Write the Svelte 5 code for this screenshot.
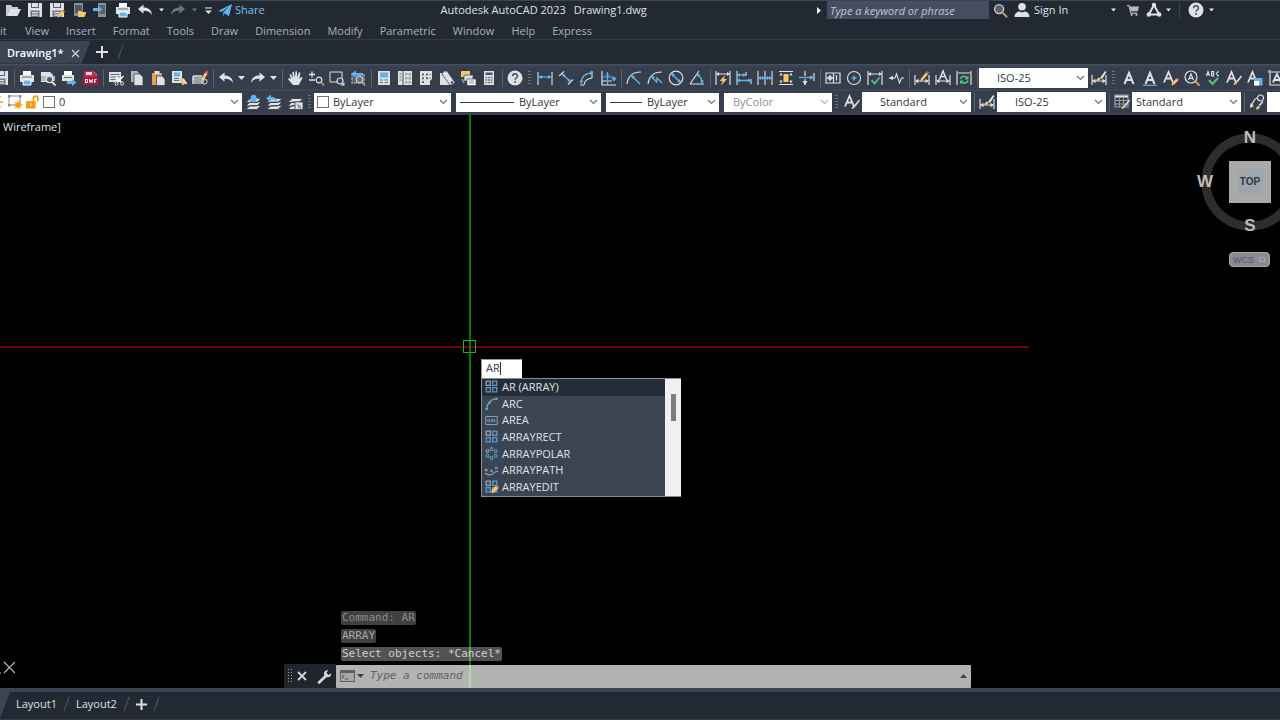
<script>
	const W = '#dfe1e5';
	const G = '#9aa1ab';
	const B = '#62b3ea';
	const Y = '#f5c766';
	const R = '#e0584f';
	const N = '#3b4453';

	const pencil = `<path d="M8.5 15.5l.8-3 4-4 2 2-4 4z" fill="${Y}"/><path d="M13.3 8.5l1-1 2 2-1 1z" fill="${R}"/>`;
	const brush = `<path d="M10 11.500l5-6 1 1-4.500 6z" fill="${W}"/><path d="M7.500 15c.2-2 1.300-3.500 3-3.200 1.500 1-.5 3.200-3 3.200z" fill="${Y}"/>`;
	const floppy = `<path d="M1 1h14v14H1z" fill="${W}"/><path d="M4 1h8v5H4z" fill="#5b626d"/><path d="M5 1h6v4H5z" fill="${W}"/><path d="M3.500 8.500h9V15h-9z" fill="#6c737d"/><path d="M5 10h6v1.300H5zM5 12.500h6v1.300H5z" fill="${W}"/>`;
	const printer = `<path d="M4 1h8v4H4z" fill="#fff"/><path d="M1 5h14v7H1z" fill="${W}"/><path d="M3 6.500h10v1H3z" fill="#666d78"/><path d="M4 10h8v5H4z" fill="${B}" stroke="#fff"/>`;
	const bigA = `<path d="M3.500 14L8 3l4.500 11M5.200 10h5.600" fill="none" stroke="${W}" stroke-width="2"/>`;
	const smallA = `<path d="M1 12.500L5.500 2 10 12.500M2.800 8.500h5.400" fill="none" stroke="${W}" stroke-width="1.800"/>`;
	const undo = `<path d="M1 7l5.500-4.500v3C11 5.500 14.500 7.500 15 13c-2-3.300-4.500-4.300-8.500-4.200v3z" fill="${W}"/>`;
	const redo = `<path d="M15 7L9.500 2.500v3C5 5.500 1.500 7.500 1 13c2-3.300 4.500-4.300 8.500-4.200v3z" fill="${W}"/>`;
	const squares = `<g fill="none" stroke="#5a9dcc" stroke-width="1.600"><path d="M9.500 1.500h5v5h-5zM1.500 9.500h5v5h-5zM9.500 9.500h5v5h-5z"/><path d="M1.500 1.500h5v5h-5z" stroke="${G}"/></g>`;
	const dim = `<path d="M1 5v10M15 5v10M2 11h12" stroke="${W}" fill="none" stroke-width="1.200"/><path d="M1 11l3.500-2.200v4.400zM15 11l-3.500-2.200v4.400z" fill="${W}"/>`;
	const layers = `<path d="M5 4.500h11l-4 4H1zM5 8h11l-4 4H1zM5 11.500h11l-4 4H1z" fill="${W}" stroke="${N}" stroke-width=".9"/>`;

	// 16x16 artwork
	const icons = {
		floppy,
		printer,
		undo,
		redo,
		open: `<path d="M1 14V3h5l1.500 2H13v2H5z" fill="#c9cbcf"/><path d="M5 7h11l-3.500 7H1z" fill="${W}"/>`,
		saveas: floppy + pencil,
		openweb: `<path d="M3 1h9v13H3z" fill="#8b8f96"/><path d="M4 3h7v8H4z" fill="#555b64"/><path d="M7 15V9h3l1 1h4v1.500L13.500 15z" fill="${Y}"/>`,
		saveweb: `<path d="M5 1h8v14H5z" fill="#8b8f96"/><path d="M6 3h6v9H6z" fill="#59616b"/><path d="M0 6h5V3.500L9.500 7.500 5 11V9H0z" fill="${B}"/>`,
		plane: `<path d="M0 9L16 1l-3.500 14-4.800-3.200L6 15.500V10.500L14 3 4.500 10z" fill="#5db7ef"/>`,
		custom: `<path d="M2 3.500h12" stroke="${W}" stroke-width="2"/><path d="M2 8h12l-6 6z" fill="${W}"/>`,
		search: `<circle cx="6.500" cy="6.500" r="4.800" fill="#59616d" stroke="#c6c9ce" stroke-width="1.500"/><path d="M10.500 10.500l4.500 4.700" stroke="#c9a06d" stroke-width="2"/>`,
		user: `<circle cx="8" cy="4.800" r="3.800" fill="${W}"/><path d="M.5 15c0-4 3-5.500 5-5.500l2.500 1 2.500-1c2 0 5 1.500 5 5.500z" fill="${W}"/>`,
		cart: `<path d="M1 3h2.500l2 8.500H13" fill="none" stroke="#b6b9be" stroke-width="1.300"/><path d="M4 4h11l-1.500 5.500H5.200z" fill="#b6b9be"/><circle cx="6.500" cy="13.500" r="1.300" fill="#b6b9be"/><circle cx="12" cy="13.500" r="1.300" fill="#b6b9be"/>`,
		triangle: `<path d="M8 3L2.800 12.500h10.400z" fill="none" stroke="${W}" stroke-width="2"/><circle cx="8" cy="3" r="2.200" fill="${W}"/><circle cx="2.800" cy="12.500" r="2.200" fill="${W}"/><circle cx="13.200" cy="12.500" r="2.200" fill="${W}"/>`,
		help: `<circle cx="8" cy="8" r="7.500" fill="${W}"/><path d="M5.600 6.300C5.600 3 10.600 3.200 10.400 6c0 1.700-2.300 1.800-2.300 3.800" fill="none" stroke="#4a515c" stroke-width="1.500"/><circle cx="8.100" cy="12" r="1" fill="#4a515c"/>`,
		preview: `<path d="M1 2h9l3 3v7H1z" fill="${W}"/><path d="M1 6h14v5H1z" fill="#b4b8be"/><circle cx="9.500" cy="9.500" r="3.200" fill="#525a66" stroke="${W}" stroke-width="1.300"/><path d="M12 12l3.500 3.500" stroke="${W}" stroke-width="1.800"/>`,
		publish: `<path d="M3 1h8v4H3z" fill="#fff"/><path d="M1 5h12v6H1z" fill="${W}"/><path d="M3 7h8v1H3z" fill="#666d78"/><path d="M6 11h5V9l4.500 3.500L11 16v-2H6z" fill="${B}"/>`,
		dwf: `<path d="M2 1h9l4 3.500V15H2z" fill="#e9e4e6"/><path d="M1 7h15v8H1z" fill="#b5123b"/><path d="M2 1h9l4 4v2H2z" fill="#c02a4d"/><path d="M4 2h6v3H4z" fill="#ecd5da"/><path d="M3.500 9v4M3.500 9.500h2v3h-2M7.300 9l.6 3.500 1-2.500 1 2.500.6-3.500M12.500 13V9.500h2M12.500 11.300H14" fill="none" stroke="#fff"/>`,
		cut: `<path d="M1 2h12v10H1z" fill="${W}"/><path d="M2.500 4.500h9M2.500 7h9M2.500 9.500h5" stroke="#656d79" stroke-width="1.200"/><path d="M15.500 6l-6.500 6.500M8 6.500l6 6.500" stroke="#fff" stroke-width="1.500"/><circle cx="8.500" cy="13.500" r="1.600" fill="${N}" stroke="${W}"/><circle cx="14" cy="13.500" r="1.600" fill="${N}" stroke="${W}"/>`,
		copy: `<path d="M2 1h6l3 3v8H2z" fill="#b3b7bd"/><path d="M5 4h6l3 3v8.500H5z" fill="${W}" stroke="${N}" stroke-width=".8"/>`,
		paste: `<path d="M2 3h10v12H2z" fill="#e0a158"/><path d="M4.500 1h5v3h-5z" fill="${W}"/><path d="M6.500 6H12l3 3v6.500H6.500z" fill="${W}" stroke="${N}" stroke-width=".8"/>`,
		match: `<path d="M1 1h10v12H1z" fill="${W}"/><path d="M3 2.500h6v4H3z" fill="${B}"/><path d="M3 8.500h5M3 10.500h5" stroke="#656d79"/><path d="M8 10l4-2 3 4-3 3.500z" fill="${Y}"/><path d="M12 9l3.500 5" stroke="${W}" stroke-width="2"/>`,
		blockedit: `<path d="M1 6h9M1 6v7h9M3 8l-2 2" stroke="${W}" stroke-width="1.500" fill="none"/><path d="M2 7h8l3 3-2 4H2z" fill="#9ba0a8"/><path d="M9 9l4-6.500 2.500 1.500-4 6z" fill="${Y}"/><path d="M13 2.500l1-2 2.500 1.500-1 2z" fill="${R}"/><circle cx="12.500" cy="11.500" r="2.600" fill="none" stroke="${W}"/>`,
		hand: `<path d="M4 9L2.500 4.500l1.300-.6L6 8 5.300 2l1.500-.2L8 7.200 8.500 1.200H10l.2 6.300L12 2.300l1.400.4-1 6.300 2-2 1.300.8-4 7.200H6L1 9.300 2 8z" fill="${W}"/>`,
		zoom: `<path d="M1 4.500h6M4 1.500v6M1 10h6" stroke="${W}" stroke-width="1.300"/><circle cx="11" cy="10" r="2.800" fill="none" stroke="${W}" stroke-width="1.200"/><path d="M13 12l3 3.500" stroke="#c9a06d" stroke-width="1.500"/>`,
		zoomwin: `<path d="M1 2h12v10H1z" fill="none" stroke="${W}"/><circle cx="11" cy="11" r="3" fill="${N}" stroke="${W}" stroke-width="1.200"/><path d="M15.500 12.500v3h-4z" fill="${W}"/>`,
		zoomprev: `<path d="M2 4h12v9H2z" fill="#5b6472" stroke="${G}" stroke-width="1.300" stroke-dasharray="3 1"/><path d="M1 4l5-3.500V3h7v2.500H6v2z" fill="${B}"/><circle cx="9.500" cy="9.500" r="3.300" fill="#68717e" stroke="${W}"/><path d="M12 12l3 3.500" stroke="#c9a06d" stroke-width="1.500"/>`,
		props: `<path d="M2 1h12v14H2z" fill="${W}"/><path d="M4 2.500h8v5H4z" fill="${B}"/><path d="M4 10h3M8.500 10H12M4 12.500h3M8.500 12.500H12" stroke="#6b727c"/>`,
		center: `<path d="M1 1h14v14H1z" fill="${W}"/><path d="M6 1v14M2.500 4h2M2.500 7h2M2.500 10h2" stroke="#5e6670" stroke-width="1.200"/><path d="M8 3h2.500v2.500H8zM11.500 3H14v2.500h-2.500zM8 7h2.500v2.500H8zM11.500 7H14v2.500h-2.500zM8 11h2.500v2.500H8zM11.500 11H14v2.500h-2.500z" fill="#a1a7af"/>`,
		palette: `<path d="M2 1h12v8l-2 2v4H2z" fill="${W}"/><path d="M4 3.500h2v2H4zM4 7.200h2v2H4zM4 11h2v2H4zM8 3.500h2v2H8zM8 7.200h2v2H8z" fill="#5c646f"/><path d="M11.500 4.500H13M11.500 8H13" stroke="#5c646f"/>`,
		sheet: `<path d="M1 3h5l9 8-3 4H1z" fill="${W}"/><path d="M5 1h3l8 11.500-3 2.500h-2L3 4z" fill="${W}" stroke="${N}" stroke-width=".8"/><circle cx="13" cy="12.500" r="1.200" fill="${N}"/>`,
		markup: `<path d="M1 1h9v6H1z" fill="${Y}"/><path d="M4 5h9v6H4z" fill="${W}" stroke="${N}" stroke-width=".7"/><path d="M7 9h9v6.500H7z" fill="#fff" stroke="${N}" stroke-width=".7"/><path d="M9 11h5M9 13h5" stroke="#8a9099"/><path d="M2 9l2 4" stroke="${B}" stroke-width="1.500"/>`,
		calc: `<path d="M3 1h10v14H3z" fill="${W}"/><path d="M4.500 2.500h7v2.500h-7z" fill="#4f5763"/><path d="M4.500 7.500h7M4.500 10h7M4.500 12.500h7" stroke="#68707b" stroke-width="1.600" stroke-dasharray="1.700 .9"/>`,
		linear: `<path d="M1 2v13M15 2v13" stroke="${W}" stroke-width="1.100"/><path d="M2 7h12" stroke="${B}" stroke-width="1.200"/><path d="M1.500 7L5 5v4zM14.500 7L11 5v4z" fill="${B}"/>`,
		aligned: `<path d="M1 6l5-4.500M10 14.500l5-5" stroke="${W}" stroke-width="1.100"/><path d="M4.500 4.500l8 7" stroke="${B}" stroke-width="1.400"/><path d="M4 4l3.800.7-2.600 2.800zM13 12l-3.800-.7 2.600-2.800z" fill="${B}"/>`,
		arclen: `<path d="M5 15C5.500 11 8 8.500 13 8M1 15h4M13 1v7" fill="none" stroke="${W}" stroke-width="1.100"/><path d="M2 13C2.500 6.500 6 3 13 3" fill="none" stroke="${B}" stroke-width="1.400"/><path d="M2 14L1 10l3.500.8zM14.500 3L11 1v4z" fill="${B}"/>`,
		ordinate: `<path d="M2 1v14h14M2 11h10" fill="none" stroke="${W}" stroke-width="1.200"/><path d="M7.500 2v13M2 7h12" stroke="${B}" stroke-width="1.200"/><path d="M5.500 5h4M12 8h4l-2 3z" stroke="${B}" fill="${B}"/>`,
		radius: `<path d="M1 14C2 6 7 2 15 2" fill="none" stroke="${W}" stroke-width="1.200"/><path d="M14 14L6 6" stroke="${B}" stroke-width="1.400"/><path d="M5 5l4 1.200L6.200 9z" fill="${B}"/>`,
		jogged: `<path d="M1 14C2 6 7 2 15 2" fill="none" stroke="${W}" stroke-width="1.200"/><path d="M15 13l-5-5-.5 4L5 7" fill="none" stroke="${B}" stroke-width="1.300"/><path d="M4 5.500l4 1.200L5.200 9.500z" fill="${B}"/>`,
		diameter: `<circle cx="8" cy="8" r="6.800" fill="none" stroke="${W}" stroke-width="1.200"/><path d="M3.500 3.500l9 9" stroke="${B}" stroke-width="1.400"/><path d="M3 3l4 1.200L4.200 7zM13 13l-4-1.200L11.800 9z" fill="${B}"/>`,
		angular: `<path d="M1 14L10 1M1 14h14" fill="none" stroke="${W}" stroke-width="1.200"/><path d="M8 4.500c3 1.500 5 4.500 5 8.500" fill="none" stroke="${B}" stroke-width="1.300"/><path d="M7 4l4 .3-2 3zM13 14l-2-3.500h4z" fill="${B}"/>`,
		quick: `<path d="M1 1v14M15 1v14M2 4h12" stroke="${W}" stroke-width="1.200"/><path d="M1 4l3-2v4zM15 4l-3-2v4z" fill="${W}"/><path d="M10 5L4.500 11h3L6 15.500l6-6.500H9z" fill="${Y}"/>`,
		baseline: `<path d="M1 1v14M10 2v4M15 9v5" stroke="${W}" stroke-width="1.100"/><path d="M1 5h9M1 10.500h14" stroke="${B}" stroke-width="1.500"/><path d="M1 5l3-2v4zM10 5L7 3v4zM1 10.500l3-2v4zM15 10.500l-3-2v4z" fill="${B}"/>`,
		cont: `<path d="M1 1v14M8 1v14M15 1v14" stroke="${W}" stroke-width="1.100"/><path d="M1 8h14" stroke="${B}" stroke-width="1.400"/><path d="M1 8l3-2v4zM8 8L5 6v4zM8 8l3-2v4zM15 8l-3-2v4z" fill="${B}"/>`,
		space: `<path d="M1 1.500h14M1 14.500h14" stroke="${W}" stroke-width="1.200"/><path d="M5.500 4h5v8h-5z" fill="${Y}"/><path d="M1.500 5.500L3 2.500l1.500 3zM1.500 10.500L3 13.500l1.500-3zM11.500 5.500L13 2.500l1.500 3zM11.500 10.500l1.500 3 1.500-3z" fill="${W}"/>`,
		brk: `<path d="M6 1v5M6 9v6M15 3v8" stroke="${W}" stroke-width="1.200"/><path d="M0 7.500h15" stroke="${B}" stroke-width="1.400"/><path d="M15 7.500l-4-2.200v4.400z" fill="${B}"/><path d="M3.500 11h5L6 15z" fill="${W}"/>`,
		tol: `<path d="M1 3h14v10H1zM8.500 3v10" fill="none" stroke="${W}" stroke-width="1.200"/><path d="M5 5v6M2 8h6M11.500 5.500v5M10.500 6l1-.5" stroke="${W}" stroke-width="1.300"/><circle cx="5" cy="8" r="1.800" fill="none" stroke="${W}"/>`,
		mark: `<circle cx="8" cy="8" r="6.500" fill="none" stroke="${W}" stroke-width="1.100"/><path d="M8 5.500v5M5.500 8h5" stroke="${B}" stroke-width="1.500"/>`,
		inspect: `<path d="M1 1v14M15 1v14M2 4h12" stroke="${W}" stroke-width="1.200"/><path d="M1 4l3-2v4zM15 4l-3-2v4z" fill="${W}"/><path d="M4.500 10l3 3.500 5-6" fill="none" stroke="#51c47f" stroke-width="1.800"/>`,
		jog: `<path d="M1 8h6l1.500-4 3 9 2-5H16" fill="none" stroke="${W}" stroke-width="1.100"/><path d="M1 8l4-2.300v4.600z" fill="${W}"/>`,
		dimedit: dim + `<path d="M6 12l1-3.500 5-6 2 1.700-5.500 6.300z" fill="${Y}"/><path d="M12 2.500L13.500 1l2 1.500-1.500 1.700z" fill="${R}"/>`,
		dimtext: dim + `<path d="M4.500 9.500L8 1l3.500 8.500M6 6.500h4" fill="none" stroke="${W}" stroke-width="1.500"/>`,
		update: `<path d="M1 1v14M15 1v14M2 3h12" stroke="${W}" stroke-width="1.200"/><path d="M4.500 9c.5-3 5-3.500 6.500-1M12 10.500c-.8 3-5 3.500-6.500 1" fill="none" stroke="#51c47f" stroke-width="1.600"/><path d="M12.500 5.500v4h-4zM4 14.500v-4h4z" fill="#51c47f"/>`,
		dimstyle: dim + `<path d="M9 8l5-7 1.500 1-4.500 7z" fill="${W}"/><path d="M5 11c.5-2.500 2-3.800 4-3.200 1.800 1.400-1 3.200-4 3.200z" fill="${Y}"/>`,
		a1: bigA,
		a2: bigA + `<path d="M1 15.300h14" stroke="${B}" stroke-width="1.200"/>`,
		a3: smallA + pencil,
		a4: `<circle cx="7" cy="7" r="6" fill="none" stroke="${W}" stroke-width="1.200"/><path d="M4.500 10L7 4l2.500 6M5.500 8.300h3" fill="none" stroke="${W}" stroke-width="1.200"/><path d="M11.500 11.500l4 4" stroke="#d4a468" stroke-width="2"/>`,
		a5: `<path d="M1.500 6L3 1.500 4.500 6M2 4.500h2M6.500 1.500V6h2.200V1.500zM6.500 3.700h2.200M14 2c-3-1.500-3 5 0 3.500" fill="none" stroke="${W}" stroke-width="1.100"/><path d="M4 10l3.500 4L13 8" fill="none" stroke="#51c47f" stroke-width="2"/>`,
		a6: smallA + brush,
		a7: smallA + `<path d="M7 8h8.500v7.500H7z" fill="${B}"/><path d="M7 11h5v4.500H7z" fill="#fff"/>`,
		a8: `<path d="M2 2h14M2 2v13h14" fill="none" stroke="${W}" stroke-width="1.200"/><path d="M5 12.500L9 4l4 8.500M6.500 10h5" fill="none" stroke="${W}" stroke-width="1.800"/><path d="M0 0h3v3H0z" fill="${B}"/>`,
		layer1: layers + `<path d="M3.500 7l3-3h7l-3 3z" fill="${B}"/><circle cx="8.500" cy="3.500" r="2.800" fill="${B}"/>`,
		layer2: layers + `<path d="M0 4.500L5 .5V3c4 0 6 1 6 5-1.500-2-3-2.300-6-2.200V8z" fill="${B}"/>`,
		layer3: layers + `<path d="M8 8h8v7.500H8z" fill="${W}" stroke="${N}" stroke-width=".8"/><path d="M10 11h1.500v3M13 11v3h1.500" fill="none" stroke="#7b828c"/>`,
		tablestyle: `<path d="M1 1h13v12H1z" fill="none" stroke="${G}" stroke-width="1.200"/><path d="M1 2.500h13" stroke="${W}" stroke-width="2"/><path d="M1 6.500h13M1 10h13M5.300 4v9M9.600 4v9" stroke="${G}"/>` + brush,
		leader: `<circle cx="11.500" cy="4" r="3" fill="none" stroke="${W}" stroke-width="1.200"/><path d="M8.500 4C5 4 5 8 2 11.500" fill="none" stroke="${W}" stroke-width="1.200"/><path d="M1 14l.5-5 3.500 3z" fill="${W}"/><path d="M9.500 11l4-4 1 1-3.500 4z" fill="${W}"/><path d="M7 15.500c0-2.500 2-4 3.500-3.300 1.300 1.300-1 3.300-3.500 3.300z" fill="${Y}"/>`,
		sun: `<path d="M8 0v16M0 8h16M2.500 2.500l11 11M13.500 2.500l-11 11" stroke="#f39c12" stroke-width="1.300"/><circle cx="8" cy="8" r="4" fill="#f39c12"/>`,
		vpsun: `<path d="M2 2h11v9H2z" fill="none" stroke="#8a8f98"/><path d="M1 1h2.500v2.500H1zM12 1h2.500v2.500H12zM1 10h2.500v2.500H1z" fill="#8a8f98"/><path d="M11 6v9.500M6.300 11h9.500M7.700 7.700l6.600 6.600M14.300 7.700l-6.600 6.600" stroke="#f39c12"/><circle cx="11" cy="11" r="2.800" fill="#f39c12"/>`,
		lock: `<path d="M0 7h11v8.500H0z" fill="#f39c12"/><path d="M8.500 7V4c0-3.500 5-3.500 5 0v3" fill="none" stroke="#f39c12" stroke-width="2"/><path d="M4.800 9.500h1.500v3H4.800z" fill="#fff"/>`,
		array: squares,
		arc: `<path d="M2 15C2.500 8 7 3 14 2" fill="none" stroke="${G}" stroke-width="1.300"/><path d="M.8 13.500h2.500V16H.8zM4.500 5.500H7V8H4.500zM13 .8h2.500v2.500H13z" fill="${B}"/>`,
		area: `<path d="M1 3h14v10H1z" fill="none" stroke="${G}" stroke-width="1.200"/><path d="M3.500 6v3.500h2V6M8 6.500h2v3H8zM12 6v4" fill="none" stroke="#5a9dcc" stroke-width="1.200"/>`,
		polar: `<g fill="none" stroke="#5a9dcc" stroke-width="1.300"><circle cx="8" cy="2.500" r="1.700"/><circle cx="13" cy="5" r="1.700"/><circle cx="13" cy="11" r="1.700"/><circle cx="8" cy="13.500" r="1.700"/><circle cx="3" cy="11" r="1.700"/><circle cx="3" cy="5" r="1.700" stroke="${G}"/></g>`,
		path: `<path d="M0 11c5 3.500 9 2 11 0s3-2 5-2" fill="none" stroke="${G}" stroke-width="1.500"/><path d="M0 6h3v3H0z" fill="${G}"/><path d="M6.500 7h3v3h-3zM12.500 3.500h3v3h-3z" fill="#5a9dcc"/>`,
		arrayedit: squares + `<path d="M7.500 16l1-4 5-5 3 3-5 5z" fill="${Y}"/><path d="M13.500 7l1.300-1.300 3 3-1.300 1.300z" fill="${R}"/>`,
		wrench: `<path d="M2.200 14.500L8.500 8.200" stroke="#d5d5d5" stroke-width="3" stroke-linecap="round"/><path d="M15 4.500l-2.600 2-2.400-2.400 2-2.700C8.500.5 6.500 4 7.800 7l1.500 1.500C12.500 9.700 15.800 7.500 15 4.500z" fill="#d5d5d5"/>`
	};

	const quickAccess = ['open', 'floppy', 'saveas', 'openweb', 'saveweb', 'printer', 'undo'];
	const menus = ['View', 'Insert', 'Format', 'Tools', 'Draw', 'Dimension', 'Modify', 'Parametric', 'Window', 'Help', 'Express'];

	// | separator, : grip, v drop arrow
	const standardBar = 'floppy | printer preview publish dwf | cut copy paste match blockedit | undo v redo v | hand zoom zoomwin zoomprev | props center palette sheet markup calc | help : linear aligned arclen ordinate | radius jogged diameter angular | quick baseline cont space brk | tol mark inspect jog | dimedit dimtext update |'.split(' ');
	const textBar = 'dimstyle : a1 a2 a3 a4 a5 a6 a7 a8'.split(' ');

	const commands = [
		['array', 'AR (ARRAY)'],
		['arc', 'ARC'],
		['area', 'AREA'],
		['array', 'ARRAYRECT'],
		['polar', 'ARRAYPOLAR'],
		['path', 'ARRAYPATH'],
		['arrayedit', 'ARRAYEDIT']
	];

	let selected = $state(0);
	let typed = $state('AR');
	let commandLine = $state('');
</script>

{#snippet icon(name, size = 16)}
	<svg class="icon" width={size} height={size} viewBox="0 0 16 16" aria-hidden="true">{@html icons[name]}</svg>
{/snippet}

{#snippet arrow()}
	<svg width="7" height="4" viewBox="0 0 7 4" aria-hidden="true"><path d="M0 0h7L3.500 4z" fill="#dfe1e5" /></svg>
{/snippet}

{#snippet chevron()}
	<svg class="chevron" width="9" height="6" viewBox="0 0 9 6" aria-hidden="true"><path d="M1 1l3.500 3.500L8 1" fill="none" stroke="#6d727a" stroke-width="1.200" /></svg>
{/snippet}

{#snippet tools(items)}
	{#each items as t}
		{#if t === '|'}
			<span class="sep"></span>
		{:else if t === ':'}
			<span class="grip"></span>
		{:else if t === 'v'}
			<button class="drop" aria-label="More">{@render arrow()}</button>
		{:else}
			<button class="tool" aria-label={t}>{@render icon(t)}</button>
		{/if}
	{/each}
{/snippet}

{#snippet combo(label, value, kind)}
	<div class="combo {kind}">
		<select aria-label={label}><option>{value}</option></select>
		{@render chevron()}
	</div>
{/snippet}

<div class="app">
	<header class="title-bar">
		<div class="quick">
			{#each quickAccess as q}
				<button class="tool wide" aria-label={q}>{@render icon(q)}</button>
			{/each}
			<button class="drop" aria-label="Undo list">{@render arrow()}</button>
			<button class="tool wide dim" aria-label="redo">{@render icon('redo')}</button>
			<button class="drop dim" aria-label="Redo list">{@render arrow()}</button>
			<button class="tool narrow" aria-label="Customize">{@render icon('custom', 9)}</button>
			<button class="share">{@render icon('plane', 14)}Share</button>
		</div>
		<div class="title"><span>Autodesk AutoCAD 2023</span><span>Drawing1.dwg</span></div>
		<div class="account">
			<svg class="play" width="4" height="7" viewBox="0 0 4 7" aria-hidden="true"><path d="M0 0l4 3.500L0 7z" fill="#fff" /></svg>
			<input class="keyword" type="text" aria-label="Search" placeholder="Type a keyword or phrase" />
			<button class="tool wide" aria-label="Find">{@render icon('search', 15)}</button>
			<button class="sign">{@render icon('user')}Sign In</button>
			<button class="drop" aria-label="Account menu">{@render arrow()}</button>
			<button class="tool cart" aria-label="Cart">{@render icon('cart', 14)}</button>
			<button class="tool" aria-label="Autodesk">{@render icon('triangle')}</button>
			<button class="drop tight" aria-label="Autodesk menu">{@render arrow()}</button>
			<span class="rule"></span>
			<button class="tool" aria-label="Help">{@render icon('help')}</button>
			<button class="drop" aria-label="Help menu">{@render arrow()}</button>
		</div>
	</header>

	<nav class="menu-bar">
		<button class="edit" aria-label="Edit">it</button>
		{#each menus as m}
			<button>{m}</button>
		{/each}
	</nav>

	<div class="file-tabs">
		<div class="file-tab">
			<button>Drawing1*</button>
			<button aria-label="Close drawing">
				<svg width="9" height="9" viewBox="0 0 9 9"><path d="M1 1l7 7M8 1L1 8" stroke="#c9ccd1" stroke-width="1.400" /></svg>
			</button>
		</div>
		<button class="plus" aria-label="New drawing">
			<svg width="12" height="12" viewBox="0 0 12 12"><path d="M6 0v12M0 6h12" stroke="#dfe1e5" stroke-width="2" /></svg>
		</button>
		<span class="slash"></span>
	</div>

	<div class="toolbars">
		<div class="row standard">
			{@render tools(standardBar)}
			{@render combo('Dimension style', 'ISO-25', 'style indent')}
			{@render tools(textBar)}
		</div>
		<div class="row">
			<div class="combo layer">
				<span class="half">{@render icon('sun')}</span>
				{@render icon('vpsun')}
				{@render icon('lock', 14)}
				<span class="swatch"></span>
				<select aria-label="Layer"><option>0</option></select>
				{@render chevron()}
			</div>
			{@render tools(['layer1', 'layer2', 'layer3', ':'])}
			<div class="combo color">
				<span class="swatch"></span>
				<select aria-label="Color"><option>ByLayer</option></select>
				{@render chevron()}
			</div>
			<div class="combo linetype">
				<span class="line"></span>
				<select aria-label="Linetype"><option>ByLayer</option></select>
				{@render chevron()}
			</div>
			<div class="combo weight">
				<span class="line"></span>
				<select aria-label="Lineweight"><option>ByLayer</option></select>
				{@render chevron()}
			</div>
			<div class="combo plot">
				<select aria-label="Plot style" disabled><option>ByColor</option></select>
				{@render chevron()}
			</div>
			{@render tools([':', 'a6'])}
			{@render combo('Text style', 'Standard', 'style indent')}
			{@render tools(['|', 'dimstyle'])}
			{@render combo('Dimension style', 'ISO-25', 'style indent')}
			{@render tools(['|', 'tablestyle'])}
			{@render combo('Table style', 'Standard', 'style')}
			{@render tools(['|', 'leader'])}
			{@render combo('Multileader style', 'Standard', 'style indent')}
		</div>
	</div>

	<main class="canvas">
		<div class="view-label">Wireframe]</div>
		<div class="axis-x"></div>
		<div class="axis-y"></div>
		<div class="pickbox"></div>

		<div class="prompt">
			<div class="typed"><input type="text" aria-label="Dynamic input" bind:value={typed} /><span class="caret"></span></div>
			<div class="suggest">
				<ul>
					{#each commands as [name, text], i}
						<li>
							<button class:selected={i === selected} onclick={() => (selected = i)}>{@render icon(name, 13)}{text}</button>
						</li>
					{/each}
				</ul>
				<div class="scroll"><div class="thumb"></div></div>
			</div>
		</div>

		<div class="compass">
			<svg width="98" height="98" viewBox="0 0 98 98" aria-hidden="true"><circle cx="49" cy="49" r="44" fill="none" stroke="#2d2d2d" stroke-width="9" /></svg>
			<span class="n">N</span>
			<span class="w">W</span>
			<span class="s">S</span>
			<button class="cube"><span>TOP</span></button>
		</div>
		<button class="wcs">WCS <i></i></button>

		<svg class="ucs" width="15" height="13" viewBox="0 0 15 13" aria-hidden="true"><path d="M4 1l11 11M15 1L4 12M0 12h1" stroke="#b9b9b9" stroke-width="1.200" /></svg>

		<div class="console">
			<div class="history">
				<div class="old">Command: AR</div>
				<div class="mid">ARRAY</div>
				<div class="new">Select objects: *Cancel*</div>
			</div>
			<div class="command">
				<span class="handle"></span>
				<button class="x" aria-label="Close">
					<svg width="10" height="10" viewBox="0 0 10 10"><path d="M1 1l8 8M9 1L1 9" stroke="#d5d5d5" stroke-width="1.800" /></svg>
				</button>
				<button class="x" aria-label="Customize">{@render icon('wrench', 15)}</button>
				<div class="entry">
					<svg width="15" height="12" viewBox="0 0 15 12" aria-hidden="true"><path d="M.5.5h14v11H.5z" fill="#a6a6a6" stroke="#606060" /><path d="M0 0h15v3H0z" fill="#606060" /><path d="M2 5l2 1.500L2 8M5 9h3" fill="none" stroke="#505050" /></svg>
					<svg width="7" height="4" viewBox="0 0 7 4" aria-hidden="true"><path d="M0 0h7L3.500 4z" fill="#404040" /></svg>
					<input type="text" aria-label="Command" placeholder="Type a command" bind:value={commandLine} />
					<button class="up" aria-label="History">
						<svg width="7" height="4" viewBox="0 0 7 4"><path d="M0 4h7L3.500 0z" fill="#404040" /></svg>
					</button>
				</div>
			</div>
		</div>
	</main>

	<footer class="layouts">
		<span class="model"></span>
		<button>Layout1</button>
		<span class="slash"></span>
		<button>Layout2</button>
		<span class="slash"></span>
		<button aria-label="New layout">
			<svg width="11" height="11" viewBox="0 0 11 11"><path d="M5.500 0v11M0 5.500h11" stroke="#dfe1e5" stroke-width="2" /></svg>
		</button>
		<span class="slash"></span>
	</footer>
</div>

<style>
	:global(body) {
		margin: 0;
		background: #000;
	}

	.app {
		display: flex;
		flex-direction: column;
		height: 100vh;
		overflow: hidden;
		background: #222933;
		color: #dfe1e5;
		font-family: "Open Sans", "Noto Sans", sans-serif;
		font-size: 11px;
		line-height: 16px;
	}

	button,
	input,
	select {
		font: inherit;
		color: inherit;
		background: none;
		border: 0;
		padding: 0;
		margin: 0;
		border-radius: 0;
		outline: none;
	}

	button {
		display: flex;
		align-items: center;
		justify-content: center;
		flex: none;
		white-space: nowrap;
	}

	svg {
		display: block;
		flex: none;
	}

	.icon {
		overflow: visible;
	}

	.title-bar {
		display: flex;
		height: 20px;
		flex: none;
		box-sizing: border-box;
		border-top: 1px solid #3b4453;
		padding-bottom: 1px;
	}

	.quick,
	.account {
		display: flex;
		align-items: center;
		flex: none;
	}

	.quick {
		padding-left: 2px;
	}

	.tool {
		width: 21px;
		height: 18px;
	}

	.tool.wide {
		width: 22px;
	}

	.tool.narrow {
		width: 16px;
	}

	.drop {
		width: 11px;
		height: 18px;
	}

	.title-bar svg[width="7"] {
		width: 5px;
	}

	.dim {
		opacity: 0.4;
	}

	.share {
		gap: 3px;
		padding-left: 2px;
		color: #7cc0ee;
	}

	.title {
		display: flex;
		flex: 1;
		align-items: center;
		gap: 8px;
		padding-left: 176px;
		white-space: nowrap;
	}

	.account {
		padding-right: 63px;
	}

	.play {
		margin-right: 6px;
	}

	.keyword {
		width: 162px;
		height: 18px;
		box-sizing: border-box;
		padding-left: 3px;
		background: #464d61;
		font-style: italic;
	}

	.keyword::placeholder {
		color: #c1c5cc;
		opacity: 1;
	}

	.sign {
		gap: 4px;
		width: 97px;
		justify-content: flex-start;
		padding-left: 3px;
	}

	.cart {
		margin-left: 3px;
	}

	.drop.tight {
		width: 8px;
	}

	.rule {
		width: 1px;
		height: 17px;
		margin: 0 5px 0 7px;
		background: #3b4453;
	}

	.menu-bar {
		display: flex;
		align-items: center;
		gap: 17px;
		height: 20px;
		flex: none;
		box-sizing: border-box;
		padding-top: 2px;
		border-bottom: 1px solid #333b48;
		color: #abb0b8;
	}

	.menu-bar .edit {
		width: 8px;
		justify-content: flex-start;
	}

	.file-tabs {
		display: flex;
		align-items: center;
		height: 24px;
		flex: none;
	}

	.file-tab {
		display: flex;
		align-items: center;
		gap: 7px;
		height: 21px;
		padding: 2px 11px 0 7px;
		background: #3b4453;
		clip-path: polygon(0 0, 100% 0, calc(100% - 9px) 100%, 0 100%);
		color: #fff;
		font-weight: 600;
	}

	.plus {
		margin: 0 12px 0 5px;
	}

	.slash {
		width: 1px;
		height: 14px;
		flex: none;
		background: #525a66;
		transform: skewX(-20deg);
	}

	.toolbars {
		flex: none;
		display: flex;
		flex-direction: column;
		gap: 2px;
		box-sizing: border-box;
		padding: 2px 0;
		background: #3b4453;
		border-top: 1px solid #465060;
		overflow: hidden;
	}

	.row {
		display: flex;
		align-items: center;
		height: 22px;
		background: #363e4c;
	}

	.row > :global(*) {
		flex: none;
	}

	.standard {
		margin-left: -10px;
	}

	.sep {
		width: 1px;
		height: 18px;
		margin: 0 1px 0 3px;
		background: #5a6473;
	}

	.grip {
		width: 3px;
		height: 14px;
		margin: 0 3px;
		background: repeating-linear-gradient(#6a7381 0 1px, transparent 1px 3px);
	}

	.combo {
		display: flex;
		align-items: center;
		height: 19px;
		box-sizing: border-box;
		background: #fff;
		color: #33373d;
		overflow: hidden;
	}

	.combo select {
		flex: 1;
		min-width: 0;
		height: 18px;
		appearance: none;
		padding-left: 4px;
	}

	.chevron {
		margin: 0 3px 0 -12px;
		pointer-events: none;
	}

	.combo.style {
		width: 109px;
		height: 20px;
	}

	.combo.indent select {
		padding-left: 18px;
	}

	.layer {
		width: 242px;
	}

	.half {
		width: 3px;
		display: flex;
		justify-content: flex-end;
		overflow: hidden;
		margin-right: 4px;
	}

	.layer .icon {
		margin-right: 3px;
	}

	.half :global(.icon) {
		margin: 0;
	}

	.swatch {
		width: 12px;
		height: 12px;
		box-sizing: border-box;
		flex: none;
		border: 1px solid #6b7078;
	}

	.color {
		width: 137px;
		padding-left: 3px;
	}

	.linetype {
		width: 145px;
		margin-left: 5px;
		padding-left: 4px;
	}

	.weight {
		width: 113px;
		margin-left: 5px;
		padding-left: 4px;
	}

	.line {
		width: 54px;
		height: 1px;
		flex: none;
		background: #33373d;
	}

	.weight .line {
		width: 32px;
	}

	.weight select,
	.linetype select {
		padding-left: 5px;
	}

	.plot {
		width: 108px;
		margin-left: 5px;
	}

	.plot select {
		padding-left: 9px;
		color: #8c8f94;
		opacity: 1;
	}

	.plot .chevron {
		opacity: 0.5;
	}

	.canvas {
		position: relative;
		flex: 1;
		min-height: 0;
		background: #000;
		overflow: hidden;
	}

	.view-label {
		padding: 4px 3px;
	}

	.axis-x {
		position: absolute;
		top: 231px;
		left: 0;
		width: 1029px;
		height: 2px;
		background: #740305;
	}

	.axis-y {
		position: absolute;
		top: 0;
		bottom: 0;
		left: 469px;
		width: 2px;
		background: #077a0b;
	}

	.pickbox {
		position: absolute;
		top: 225px;
		left: 463px;
		width: 11px;
		height: 11px;
		border: 1px solid #12b81c;
	}

	.prompt {
		position: absolute;
		top: 244px;
		left: 481px;
		width: 200px;
	}

	.typed {
		position: relative;
		width: 36px;
		height: 18px;
		padding-left: 4px;
		border: 1px solid #999;
		border-width: 1px 0 0 1px;
		background: #fff;
		color: #33373d;
	}

	.typed input {
		display: block;
		width: 100%;
		height: 16px;
		caret-color: transparent;
	}

	.caret {
		position: absolute;
		top: 2px;
		left: 18px;
		width: 1px;
		height: 13px;
		background: #33373d;
	}

	.suggest {
		display: flex;
		border: 1px solid #8b8f96;
		border-right: 0;
		background: #3b4453;
	}

	.suggest ul {
		flex: 1;
		margin: 0;
		padding: 0;
		list-style: none;
	}

	.suggest li button {
		justify-content: flex-start;
		gap: 4px;
		width: 100%;
		height: 17px;
		padding: 0 0 2px 3px;
	}

	.suggest li:nth-child(3n) button {
		height: 16px;
	}

	.suggest li .selected {
		background: #272d38;
	}

	.scroll {
		width: 16px;
		background: #f0f0f0;
	}

	.thumb {
		width: 5px;
		height: 27px;
		margin: 15px auto 0;
		background: #7d7d7d;
	}

	.compass {
		position: absolute;
		top: 18px;
		right: -19px;
		width: 98px;
		height: 98px;
		color: #bdbdbd;
		font: bold 17px/18px "Liberation Sans", Arial, sans-serif;
	}

	.compass > span,
	.cube {
		position: absolute;
		text-align: center;
	}

	.n {
		top: -4px;
		left: 41px;
		width: 16px;
	}

	.s {
		bottom: -4px;
		left: 41px;
		width: 16px;
	}

	.w {
		top: 40px;
		left: -4px;
		width: 16px;
	}

	.cube {
		top: 28px;
		left: 28px;
		width: 42px;
		height: 42px;
		background: #a9a9a9;
		color: #333a44;
		font-size: 10px;
	}

	.cube span {
		width: 26px;
		line-height: 26px;
		background: #9fa6ab;
	}

	.wcs {
		position: absolute;
		top: 137px;
		right: 10px;
		width: 41px;
		height: 15px;
		box-sizing: border-box;
		justify-content: space-between;
		padding: 0 4px 0 3px;
		border: 1px solid #a5a5ad;
		border-radius: 4px;
		background: #8a8a93;
		color: #56565e;
		font: 9px/12px "Liberation Sans", Arial, sans-serif;
	}

	.wcs i {
		width: 4px;
		height: 3px;
		border: 1px solid #a5a5ad;
	}

	.ucs {
		position: absolute;
		left: 0;
		bottom: 14px;
	}

	.console {
		position: absolute;
		left: 284px;
		right: 309px;
		bottom: 0;
		font-family: "DejaVu Sans Mono", monospace;
	}

	.history {
		display: flex;
		flex-direction: column;
		align-items: flex-start;
		gap: 4px;
		padding: 0 0 3px 57px;
		line-height: 14px;
	}

	.history div {
		padding: 0 1px;
		border-radius: 2px;
		background: rgba(255, 255, 255, 0.25);
	}

	.history .old {
		color: #8a8a8a;
	}

	.history .mid {
		color: #a6a6a6;
	}

	.history .new {
		background: rgba(255, 255, 255, 0.32);
		color: #d0d0d0;
	}

	.command {
		display: flex;
		align-items: center;
		height: 24px;
		background: linear-gradient(90deg, #20242b 52px, transparent 52px);
	}

	.handle {
		width: 5px;
		height: 16px;
		margin: 0 4px 0 3px;
		background: radial-gradient(circle, #a5a5a5 1px, transparent 1px) 0 0 / 3px 3px;
	}

	.x {
		width: 12px;
	}

	.x + .x {
		width: 15px;
		margin: 0 4px 0 9px;
	}

	.entry {
		display: flex;
		flex: 1;
		align-items: center;
		gap: 2px;
		height: 23px;
		padding-left: 4px;
		border-radius: 1px;
		background: rgba(255, 255, 255, 0.7);
		color: #333;
	}

	.entry input {
		flex: 1;
		min-width: 0;
		padding-left: 4px;
	}

	.entry input::placeholder {
		color: #606060;
		font-style: italic;
		opacity: 1;
	}

	.up {
		margin-right: 4px;
	}

	.layouts {
		display: flex;
		align-items: center;
		gap: 9px;
		height: 24px;
		flex: none;
		padding-bottom: 3px;
		border-top: 4px solid #3b4453;
		border-bottom: 1px solid #333b48;
	}

	.model {
		width: 10px;
		height: 100%;
		margin-right: -3px;
		background: #3b4453;
		clip-path: polygon(0 0, 100% 0, 10% 100%, 0 100%);
	}
</style>
